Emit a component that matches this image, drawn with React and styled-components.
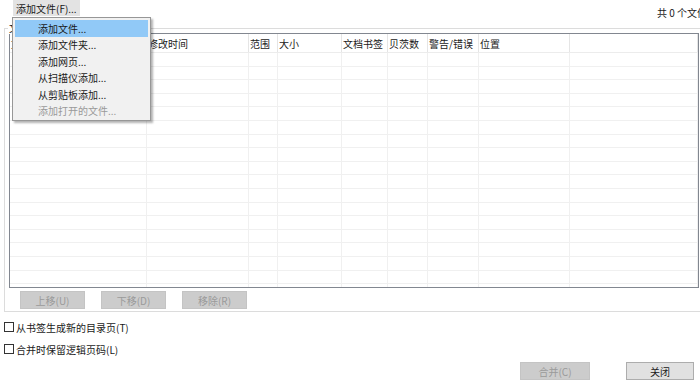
import React from 'react';
import styled, { createGlobalStyle } from 'styled-components';

const GlobalStyle = createGlobalStyle`
  html, body {
    margin: 0;
    padding: 0;
    background: #ffffff;
    overflow: hidden;
  }
  body {
    font-family: "Noto Sans CJK SC", "Noto Sans", sans-serif;
    font-size: 10px;
    color: #1a1a1a;
  }
`;

const Page = styled.div`
  position: relative;
  width: 700px;
  height: 387px;
  overflow: hidden;
`;

const TopBar = styled.div`
  display: flex;
  justify-content: space-between;
  align-items: flex-start;
  height: 28px;
  padding-left: 13px;
`;

const ToolButton = styled.div`
  display: flex;
  align-items: center;
  height: 16px;
  padding: 0 3px;
  background: #e3e3e3;
  white-space: nowrap;
`;

const Count = styled.div`
  margin-top: 6px;
  margin-right: -7px;
  white-space: nowrap;
  line-height: 14px;
`;

const Group = styled.div`
  position: relative;
  margin-left: 4px;
  border-top: 1px solid #dcdcdc;
  border-left: 1px solid #dcdcdc;
  border-bottom: 1px solid #dcdcdc;
  padding: 4px 0 0 4px;
  height: 284px;
  box-sizing: border-box;
`;

const GroupLabel = styled.div`
  position: absolute;
  top: -7px;
  left: 3px;
  background: #fff;
  padding: 0 1px;
  line-height: 12px;
`;

const Table = styled.div`
  width: 690px;
  height: 255px;
  box-sizing: border-box;
  border: 1px solid #828790;
  overflow: hidden;
`;

const cols = '137px 102px 29px 64px 46px 40px 51px 91px 1fr';

const HeaderRow = styled.div`
  display: grid;
  grid-template-columns: ${cols};
  height: 19px;
  border-bottom: 1px solid #ececec;
  box-sizing: border-box;
`;

const HeaderCell = styled.div`
  display: flex;
  align-items: center;
  padding-left: 1px;
  border-right: 1px solid #e5e5e5;
  white-space: nowrap;
  overflow: hidden;
`;

const Row = styled.div`
  display: grid;
  grid-template-columns: ${cols};
  height: 13.6px;
  border-bottom: 1px solid #f0f0f0;
  box-sizing: border-box;
`;

const Cell = styled.div`
  border-right: 1px solid #f0f0f0;
`;

const ButtonRow = styled.div`
  display: flex;
  gap: 16px;
  margin: 3px 0 0 11px;
`;

const Button = styled.div`
  display: flex;
  align-items: center;
  justify-content: center;
  width: ${(p) => p.w || 65}px;
  height: 18px;
  box-sizing: border-box;
  border: 1px solid ${(p) => (p.disabled ? '#c4c4c4' : '#adadad')};
  background: ${(p) => (p.disabled ? '#cccccc' : '#e1e1e1')};
  color: ${(p) => (p.disabled ? '#9a9a9a' : '#1a1a1a')};
  white-space: nowrap;
`;

const Options = styled.div`
  display: flex;
  flex-direction: column;
  gap: 8px;
  margin: 8px 0 0 4px;
`;

const CheckRow = styled.label`
  display: flex;
  align-items: center;
  gap: 2px;
  height: 14px;
  white-space: nowrap;
`;

const Box = styled.span`
  width: 10px;
  height: 10px;
  box-sizing: border-box;
  border: 1px solid #333;
  background: #fff;
`;

const Footer = styled.div`
  display: flex;
  justify-content: flex-end;
  gap: 36px;
  margin: 6px 6px 0 0;
`;

const Menu = styled.div`
  position: absolute;
  left: 12px;
  top: 17px;
  width: 139px;
  height: 104px;
  box-sizing: border-box;
  padding: 2px;
  background: #f1f1f1;
  border: 1px solid #979797;
  box-shadow: 2px 2px 2px rgba(0, 0, 0, 0.3);
`;

const MenuItem = styled.div`
  display: flex;
  align-items: center;
  height: 16.5px;
  padding-left: 23px;
  background: ${(p) => (p.active ? '#91c9f7' : 'transparent')};
  color: ${(p) => (p.disabled ? '#9a9a9a' : '#1a1a1a')};
  white-space: nowrap;
`;

const headers = ['文件名', '修改时间', '范围', '大小', '文档书签', '贝茨数', '警告/错误', '位置', ''];
const menuItems = ['添加文件...', '添加文件夹...', '添加网页...', '从扫描仪添加...', '从剪贴板添加...', '添加打开的文件...'];

export default function App() {
  return (
    <Page>
      <GlobalStyle />
      <TopBar>
        <ToolButton>添加文件(F)...</ToolButton>
        <Count>共 0 个文件</Count>
      </TopBar>
      <Group>
        <GroupLabel>文件</GroupLabel>
        <Table>
          <HeaderRow>
            {headers.map((h, i) => (
              <HeaderCell key={i}>{h}</HeaderCell>
            ))}
          </HeaderRow>
          {Array.from({ length: 18 }).map((_, r) => (
            <Row key={r}>
              {headers.map((_, i) => (
                <Cell key={i} />
              ))}
            </Row>
          ))}
        </Table>
        <ButtonRow>
          <Button disabled>上移(U)</Button>
          <Button disabled>下移(D)</Button>
          <Button disabled>移除(R)</Button>
        </ButtonRow>
      </Group>
      <Options>
        <CheckRow><Box />从书签生成新的目录页(T)</CheckRow>
        <CheckRow><Box />合并时保留逻辑页码(L)</CheckRow>
      </Options>
      <Footer>
        <Button disabled w={70}>合并(C)</Button>
        <Button w={68}>关闭</Button>
      </Footer>
      <Menu>
        {menuItems.map((m, i) => (
          <MenuItem key={m} active={i === 0} disabled={i === menuItems.length - 1}>
            {m}
          </MenuItem>
        ))}
      </Menu>
    </Page>
  );
}
